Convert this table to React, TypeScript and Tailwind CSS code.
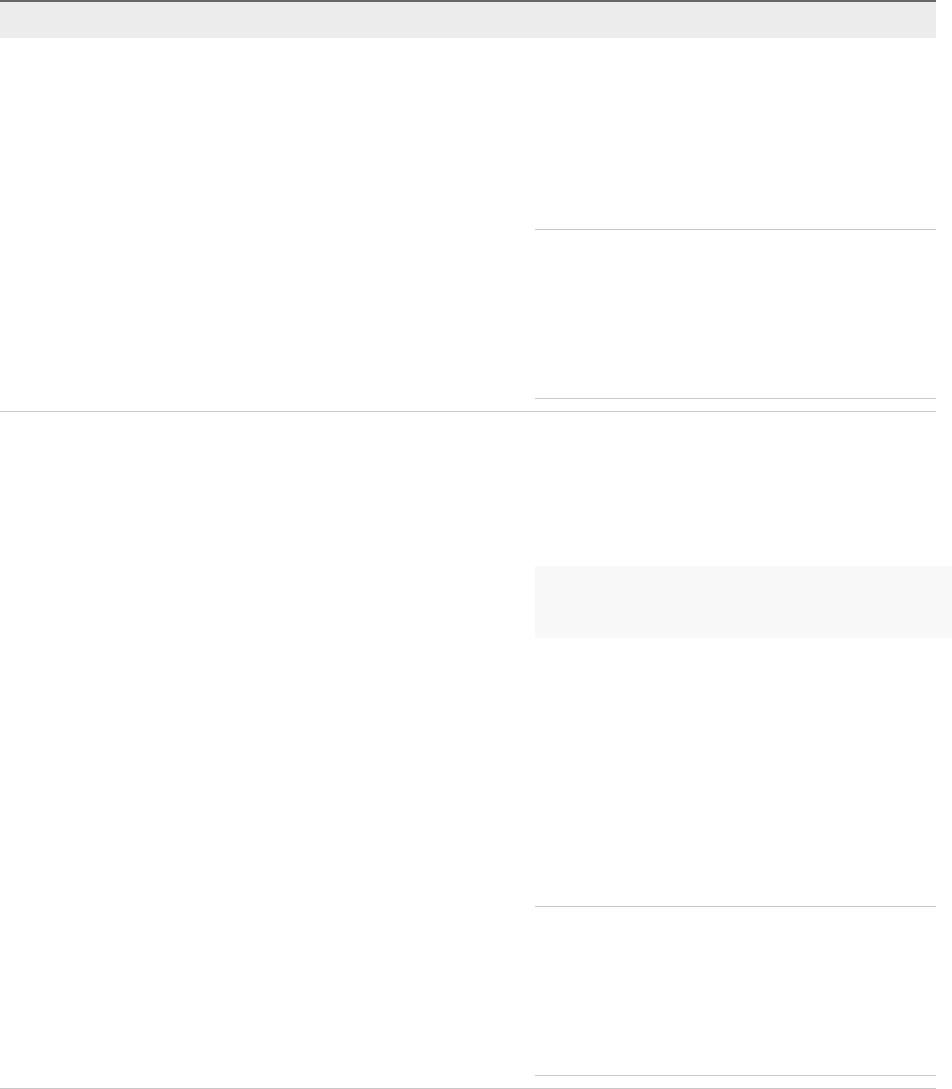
export default function App() {
  return (
    <div className="min-h-screen bg-white font-['Liberation_Sans',sans-serif]">
      <div className="w-[936px]">
        <div className="h-[38px] border-t-2 border-[#666666] bg-[#ececec]" />

        <div className="flex border-b border-[#c8c8c8] pb-3">
          <div className="w-[535px]" />
          <div className="flex-1">
            <div className="h-[192px] border-b border-[#c8c8c8]" />
            <div className="h-[169px] border-b border-[#c8c8c8]" />
          </div>
        </div>

        <div className="flex border-b border-[#c8c8c8] pb-3">
          <div className="w-[535px]" />
          <div className="flex-1">
            <div className="h-[154px]" />
            <div className="-mr-4 h-[72px] bg-[#f8f8f8]" />
            <div className="h-[269px] border-b border-[#c8c8c8]" />
            <div className="h-[169px] border-b border-[#c8c8c8]" />
          </div>
        </div>
      </div>
    </div>
  )
}
